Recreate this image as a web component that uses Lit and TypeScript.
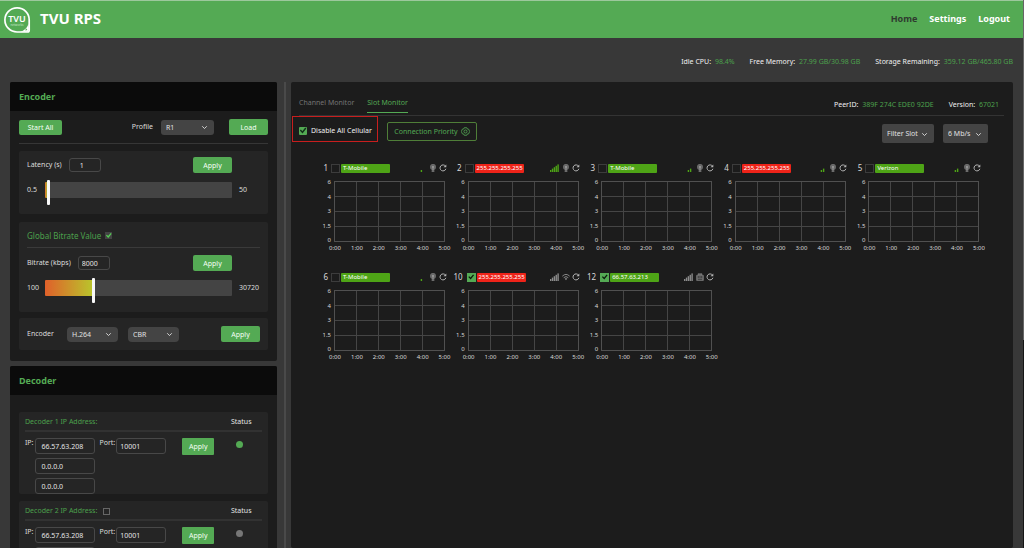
import { LitElement, html, css, svg, nothing } from "lit";
import { customElement, property } from "lit/decorators.js";

const controls = css`
  * { box-sizing: border-box; }
  button, input, select { font: inherit; color: inherit; margin: 0; }
  button {
    border: 0; padding: 1px 0 0; background: #54aa54; color: #f4fff4; cursor: pointer;
    font-size: 7px; line-height: 12px; border-radius: 2px; height: 16px; width: 39px;
  }
  .text {
    background: transparent; border: 1px solid #484848; border-radius: 3px; color: #e4e4e4;
    font-size: 7px; outline: none;
  }
  input[type="checkbox"] { appearance: none; flex: none; display: grid; place-items: center; }
  input[type="checkbox"]:checked::before {
    content: ""; width: 100%; height: 100%; background: currentColor;
    clip-path: polygon(10% 50%, 24% 38%, 42% 58%, 78% 14%, 92% 26%, 44% 86%);
  }
`;

const chevron = html`<svg class="chev" viewBox="0 0 8 8" aria-hidden="true">
  <path d="M1.4 2.6 4 5.2 6.6 2.6" fill="none" stroke="#d8d8d8" stroke-width="1.1" /></svg>`;

@customElement("pick-list")
class PickList extends LitElement {
  @property() value = "";
  @property() label = "";
  static styles = [controls, css`
    :host { display: block; position: relative; }
    select {
      appearance: none; width: 100%; height: 100%; display: block; border: 0; outline: none;
      border-radius: inherit; background: #444; color: #e0e0e0; padding: 1px 0 0 5px; font-size: 7px;
    }
    .chev { position: absolute; right: var(--chev, 6px); top: 50%; width: 7px; height: 7px; margin-top: -3px; pointer-events: none; }
  `];
  render() {
    return html`<select aria-label=${this.label}><option>${this.value}</option></select>${chevron}`;
  }
}

@customElement("range-bar")
class RangeBar extends LitElement {
  @property({ type: Number }) min = 0;
  @property({ type: Number }) max = 100;
  @property({ type: Number }) value = 0;
  @property() label = "";
  static styles = css`
    :host { display: block; }
    input {
      appearance: none; display: block; width: 100%; height: 16px; margin: 0; background: none;
    }
    input::-webkit-slider-runnable-track {
      height: 16px; border-radius: 1px;
      background: linear-gradient(90deg, #e0602a, #b9c62c) 0 0 / var(--fill) 100% no-repeat #444;
    }
    input::-webkit-slider-thumb {
      appearance: none; width: 3px; height: 25px; margin-top: -2px; background: #f8f8f8; border-radius: 1px;
    }
  `;
  render() {
    const fill = ((this.value - this.min) / (this.max - this.min)) * 100;
    return html`<input type="range" aria-label=${this.label} step="any" .min=${String(this.min)} .max=${String(this.max)}
      .value=${String(this.value)} style="--fill:${fill}%">`;
  }
}

interface Slot {
  id: number; name: string; alert: boolean; bars: number; live: boolean; kind: "cell" | "wifi" | "lan";
}

const slots: Slot[] = [
  { id: 1, name: "T-Mobile", alert: false, bars: 1, live: false, kind: "cell" },
  { id: 2, name: "255.255.255.255", alert: true, bars: 5, live: false, kind: "cell" },
  { id: 3, name: "T-Mobile", alert: false, bars: 2, live: false, kind: "cell" },
  { id: 4, name: "255.255.255.255", alert: true, bars: 2, live: false, kind: "cell" },
  { id: 5, name: "Verizon", alert: false, bars: 2, live: false, kind: "cell" },
  { id: 6, name: "T-Mobile", alert: false, bars: 1, live: false, kind: "cell" },
  { id: 10, name: "255.255.255.255", alert: true, bars: 5, live: true, kind: "wifi" },
  { id: 12, name: "66.57.63.213", alert: false, bars: 5, live: true, kind: "lan" },
];

const kindIcons = {
  cell: svg`<circle cx="4" cy="3" r="2.900" fill="#777"/><circle cx="4" cy="3" r="1.900" fill="none" stroke="#505050" stroke-width=".5"/><circle cx="4" cy="3" r=".9" fill="#a0a0a0"/><path d="M3.300 4h1.400v3.900H3.300z" fill="#8c8c8c"/><path d="M2.300 6.600h3.400v.9H2.300z" fill="#707070"/>`,
  wifi: svg`<path d="M.3 3.200Q4-.4 7.700 3.200M1.700 4.700Q4 2.500 6.300 4.700" fill="none" stroke="#858585" stroke-width="1"/><path d="M2.700 5.700Q4 4.500 5.300 5.700L4 7.300z" fill="#858585"/>`,
  lan: svg`<path d="M.6 7.400V2.400H2V.8h4v1.600h1.400v5z" fill="#6b6b6b" stroke="#888" stroke-width=".6"/><path d="M2.300 3v2M4 3v2M5.700 3v2M2 6.300h4" stroke="#222" stroke-width=".6"/>`,
};

@customElement("slot-card")
class SlotCard extends LitElement {
  @property({ attribute: false }) slotInfo!: Slot;
  static styles = [controls, css`
    :host { display: block; color: #d8d8d8; }
    .head { display: flex; align-items: center; height: 10px; }
    .num { width: 17px; text-align: right; font-size: 8px; line-height: 10px; }
    .num.wide { width: 18px; }
    .tick { width: 9px; height: 9px; border: 1px solid #3c3c3c; margin-left: 3px; }
    .wide + .tick { margin-left: 4px; }
    .tick:checked { background: #54aa54; border-color: #54aa54; color: #0c1c0c; }
    .name {
      width: 49px; height: 9px; line-height: 9px; margin-left: 1px; padding-left: 2px; font-size: 6px;
      color: #fff; background: #4ea416; border-radius: 1px; white-space: nowrap;
    }
    .name.alert { background: #ee2319; }
    .icons { margin: 0 -2px 0 auto; display: flex; align-items: center; gap: 2px; }
    .sig { width: 9px; height: 8px; margin-right: 1px; }
    .kind { width: 8px; height: 8px; }
    .reload { background: none; width: 8px; height: 8px; display: block; padding: 0; }
    .reload svg { width: 8px; height: 8px; display: block; }
    .body { display: grid; grid-template-columns: 20px 1fr; column-gap: 3px; padding-top: 8px; font-size: 6px; line-height: 8px; }
    .ys { display: flex; flex-direction: column; justify-content: space-between; text-align: right; height: 66px; margin-top: -3px; grid-row: 1; }
    .plot { height: 60px; width: 100%; display: block; overflow: visible; }
    .xs { grid-column: 2; display: flex; justify-content: space-between; margin: 0 -7px 0 -6px; }
    .xs span { width: 14px; text-align: center; }
  `];
  render() {
    const s = this.slotInfo;
    const tint = s.live ? "#8c8c8c" : "#4ea416";
    return html`
      <div class="head">
        <label class="num ${s.id > 9 ? "wide" : ""}" for="on">${s.id}</label>
        <input class="tick" id="on" type="checkbox" .checked=${s.live}>
        <span class="name ${s.alert ? "alert" : ""}">${s.name}</span>
        <span class="icons">
          <svg class="sig" viewBox="0 0 9 8" aria-hidden="true">
            ${(s.bars === 1 ? [2] : s.bars === 2 ? [2, 3.2] : [0, 1, 2, 3, 4]).map((x, i) => svg`<rect x=${x * 1.85} y=${6 - i * 1.4} width="1.400" height=${2 + i * 1.4} fill=${tint} />`)}
          </svg>
          <svg class="kind" viewBox="0 0 8 8" aria-hidden="true">${kindIcons[s.kind]}</svg>
          <button class="reload" aria-label="Refresh slot ${s.id}"><svg viewBox="0 0 8 8">
            <path d="M6.500 2.200A3 3 0 1 0 6.900 4.800" fill="none" stroke="#b4b4b4" stroke-width="1"/>
            <path d="M7.300.4v2.900H4.500z" fill="#b4b4b4"/></svg></button>
        </span>
      </div>
      <div class="body">
        <div class="ys">${["6", "4", "3", "1.5", "0"].map((t) => html`<span>${t}</span>`)}</div>
        <svg class="plot" aria-hidden="true">
          <g stroke="#454545" shape-rendering="crispEdges">
            ${[20, 40, 60, 80].map((p) => svg`<line x1="${p}%" x2="${p}%" y1="0" y2="100%" />`)}
            ${[25, 50, 75].map((p) => svg`<line y1="${p}%" y2="${p}%" x1="0" x2="100%" />`)}
            <rect width="100%" height="100%" fill="none" stroke="#505050" />
          </g>
        </svg>
        <div class="xs">${[0, 1, 2, 3, 4, 5].map((t) => html`<span>${t}:00</span>`)}</div>
      </div>`;
  }
}

@customElement("decoder-card")
class DecoderCard extends LitElement {
  @property({ type: Number }) index = 1;
  @property({ type: Boolean }) online = false;
  static styles = [controls, css`
    :host { display: block; background: #252525; border-radius: 2px; padding: 5px 6px 0; }
    .top { display: flex; align-items: center; height: 15px; border-bottom: 2px solid #323232; padding-bottom: 3px; color: #4ca04c; }
    .off { width: 7px; height: 7px; border: 1px solid #666; margin-left: 6px; }
    .status { margin-left: auto; width: 31px; color: #e4e4e4; }
    .row { display: flex; align-items: flex-start; padding-top: 6px; line-height: 10px; }
    .ips { display: grid; gap: 4px; width: 60px; margin: 0 4px 0 2px; }
    .ips .text, .port { height: 16px; width: 100%; padding: 0 0 0 5px; }
    .row .port { width: 50px; margin-left: 1px; padding-left: 3px; }
    button { width: 32px; height: 17px; margin-left: 16px; border-radius: 1px; }
    .dot { width: 7px; height: 7px; border-radius: 50%; background: #777; margin: 3px 19px 0 auto; }
    .dot.on { background: #54aa54; }
  `];
  render() {
    return html`
      <div class="top"><label for="use">Decoder ${this.index} IP Address:</label>
        ${this.index > 1 ? html`<input class="off" id="use" type="checkbox">` : nothing}
        <span class="status">Status</span></div>
      <div class="row"><label for="ip">IP:</label>
        <div class="ips">
          <input class="text" id="ip" value="66.57.63.208">
          <input class="text" aria-label="Second IP" value="0.0.0.0">
          <input class="text" aria-label="Third IP" value="0.0.0.0">
        </div>
        <label for="port">Port:</label><input class="text port" id="port" value="10001">
        <button>Apply</button>
        <span class="dot ${this.online ? "on" : ""}"></span>
      </div>`;
  }
}

@customElement("app-root")
class AppRoot extends LitElement {
  static styles = [controls, css`
    :host {
      display: flex; flex-direction: column; height: 100vh; overflow: hidden; background: #383838;
      color: #dcdcdc; font: 7px/10px "Noto Sans", "Open Sans", sans-serif;
      border-right: 1px solid; border-image: linear-gradient(#666 62%, #151515 62%) 1;
    }
    a { color: inherit; text-decoration: none; }
    header {
      flex: none; height: 38px; background: #54aa54; border-top: 1px solid #9cc89c; color: #fff;
      display: flex; align-items: center; padding: 0 13px 2px 3px;
    }
    .logo { width: 28px; height: 28px; margin-top: 2px; }
    h1 { margin: 0 0 2px 9px; font-size: 15px; line-height: 20px; font-weight: 700; }
    nav { margin-left: auto; display: flex; gap: 12px; font-size: 9px; line-height: 14px; font-weight: 700; }
    nav .here { color: #2f3a2f; }
    .stats { flex: none; display: flex; justify-content: flex-end; gap: 15px; padding: 19px 10px 0 0; height: 44px; }
    .stats b, .meta b { font-weight: 400; color: #4ca04c; margin-left: 2px; }
    .stats span, .meta span { color: #f0f0f0; }
    .cols { flex: 1; min-height: 0; display: flex; padding: 0 10px; }
    aside { width: 267px; flex: none; display: flex; flex-direction: column; gap: 5px; }
    .rail { flex: none; width: 2px; margin: 0 5px 0 7px; background: #4a4a4a; }
    .panel { flex: none; background: #1c1c1c; border-radius: 2px; overflow: hidden; }
    .panel h2 { margin: 0; background: #0b0b0b; color: #54aa54; font-size: 9px; line-height: 29px; font-weight: 700; padding-left: 9px; }
    .inner { padding: 0 9px 11px; }
    .load { display: flex; align-items: center; height: 33px; border-bottom: 1px solid #363636; margin-bottom: 7px; }
    .load .start { width: 43px; height: 15px; margin-right: auto; }
    .load pick-list { width: 53px; height: 15px; border-radius: 3px; margin: 0 15px 0 8px; }
    .card { background: #252525; border-radius: 2px; padding: 0 8px; }
    .latency { padding-top: 6px; padding-bottom: 16px; margin-bottom: 8px; }
    .bitrate { padding-top: 8px; padding-bottom: 16px; margin-bottom: 6px; }
    .codec { height: 32px; display: flex; align-items: center; }
    .line { display: flex; align-items: center; height: 16px; }
    .line button { margin: 0 28px 0 auto; }
    .line .text { width: 32px; height: 14px; margin-left: 7px; padding: 0 0 0 3px; }
    .line .mid { padding-left: 10px; }
    .slide { display: grid; grid-template-columns: 11px 187px 1fr; column-gap: 7px; padding-top: 9px; line-height: 16px; }
    .global { display: flex; align-items: center; gap: 4px; height: 18px; font-size: 8px; color: #4ca04c; border-bottom: 1px solid #3a3a3a; padding-bottom: 6px; margin-bottom: 7px; }
    .global input { width: 7px; height: 7px; background: #444; color: #54d054; }
    .codec pick-list { width: 51px; height: 15px; border-radius: 4px; margin-right: 10px; }
    .codec label { width: 40px; }
    .codec button { margin-left: auto; }
    .decs { padding: 17px 9px 0; display: grid; gap: 7px; }
    main { flex: 1; min-width: 0; background: #1c1c1c; border-radius: 2px; padding: 13px 9px 0 8px; }
    .tabs { display: flex; height: 21px; gap: 13px; border-bottom: 1px solid #333; line-height: 15px; color: #747474; }
    .tabs a { height: 18px; }
    .tabs .on { color: #54aa54; border-bottom: 1px solid #54aa54; }
    .meta { margin-left: auto; display: flex; gap: 15px; padding: 2px 5px 0 0; }
    .tools { display: flex; align-items: flex-start; padding-right: 16px; margin-left: -7px; }
    .cell { display: flex; align-items: center; gap: 4px; width: 86px; height: 26px; border: 1px solid #c81e1e; padding: 3px 0 0 6px; color: #f0f0f0; }
    .cell input { width: 8px; height: 8px; border-radius: 1px; background: #54aa54; color: #12301a; }
    .prio { width: 90px; height: 19px; margin: 6px auto 0 9px; background: none; border: 1px solid #4f7e38; color: #54aa54; display: flex; align-items: center; justify-content: center; gap: 3px; padding: 0; }
    .prio svg { width: 9px; height: 9px; }
    .drop { width: 52px; height: 19px; margin: 8px 0 0 9px; border-radius: 2px; --chev: 6px; }
    .drop.rate { width: 45px; }
    .slots { display: grid; grid-template-columns: repeat(5, 1fr); row-gap: 20px; padding: 20px 25px 0 12px; }
  `];
  render() {
    return html`
      <header>
        <svg class="logo" viewBox="0 0 28 28" role="img" aria-label="TVU Networks">
          <path d="M14 1.800A12 12 0 1 0 14 26H24.500Q26.200 26 26.200 24.300V14A12 12 0 0 0 14 1.800z" fill="none" stroke="#fff" stroke-width="1.700" stroke-linejoin="round"/>
          <path d="M25.500 18A12 12 0 0 1 17 25.700H24.500L26 24z" fill="#fff"/><path d="M22.300 24.400 23 22.300 24.400 24z" fill="#54aa54"/>
          <text x="14" y="16" text-anchor="middle" font-size="9" font-weight="600" fill="#fff">TVU</text>
          <text x="14" y="20" text-anchor="middle" font-size="3" fill="#c8e6c8">networks</text>
        </svg>
        <h1>TVU RPS</h1>
        <nav><a class="here" href="#home">Home</a><a href="#settings">Settings</a><a href="#logout">Logout</a></nav>
      </header>
      <div class="stats">
        <span>Idle CPU: <b>98.4%</b></span><span>Free Memory: <b>27.99 GB/30.98 GB</b></span><span>Storage Remaining: <b>359.12 GB/465.80 GB</b></span>
      </div>
      <div class="cols">
        <aside>
          <section class="panel"><h2>Encoder</h2><div class="inner">
            <div class="load"><button class="start">Start All</button><span>Profile</span><pick-list label="Profile" value="R1"></pick-list><button>Load</button></div>
            <div class="card latency">
              <div class="line"><label for="lat">Latency (s)</label><input class="text mid" id="lat" value="1"><button>Apply</button></div>
              <div class="slide"><span>0.5</span><range-bar label="Latency" .min=${0.5} .max=${50} .value=${1}></range-bar><span>50</span></div>
            </div>
            <div class="card bitrate">
              <label class="global">Global Bitrate Value <input type="checkbox" checked></label>
              <div class="line"><label for="rate">Bitrate (kbps)</label><input class="text" id="rate" value="8000"><button>Apply</button></div>
              <div class="slide"><span>100</span><range-bar label="Bitrate" .min=${100} .max=${30720} .value=${8000}></range-bar><span>30720</span></div>
            </div>
            <div class="card codec"><label>Encoder</label><pick-list label="Codec" value="H.264"></pick-list><pick-list label="Rate mode" value="CBR"></pick-list><button>Apply</button></div>
          </div></section>
          <section class="panel"><h2>Decoder</h2><div class="decs">
            <decoder-card .index=${1} online></decoder-card><decoder-card .index=${2}></decoder-card>
          </div></section>
        </aside>
        <div class="rail"></div>
        <main>
          <div class="tabs"><a href="#channel">Channel Monitor</a><a class="on" href="#slot">Slot Monitor</a>
            <div class="meta"><span>PeerID: <b>389F 274C EDE0 92DE</b></span><span>Version: <b>67021</b></span></div></div>
          <div class="tools">
            <label class="cell"><input type="checkbox" checked>Disable All Cellular</label>
            <button class="prio">Connection Priority
              <svg viewBox="0 0 10 10" aria-hidden="true"><g fill="none" stroke="#54aa54" stroke-width=".9"><path d="M3.600.8h2.800l.6 1.400 1.500.2L9.600 5 8.500 7.600 7 7.800l-.6 1.400H3.600L3 7.800l-1.500-.2L.4 5l1.100-2.600L3 2.200z"/><circle cx="5" cy="5" r="1.700"/></g></svg></button>
            <pick-list class="drop" label="Filter" value="Filter Slot"></pick-list><pick-list class="drop rate" label="Scale" value="6 Mb/s"></pick-list>
          </div>
          <div class="slots">${slots.map((s) => html`<slot-card .slotInfo=${s}></slot-card>`)}</div>
        </main>
      </div>`;
  }
}
